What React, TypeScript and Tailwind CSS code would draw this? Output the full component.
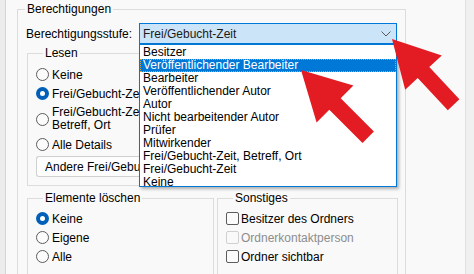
import React from "react";

const GroupBox = ({ title, className, children }: { title: string; className?: string; children?: React.ReactNode }) => (
  <fieldset className={`border border-[#dcdcdc] ${className ?? ""}`}>
    <legend className="ml-[7px] px-[2px] leading-[14px]">{title}</legend>
    {children}
  </fieldset>
);

const Radio = ({ checked }: { checked?: boolean }) =>
  checked ? (
    <span className="w-[13px] h-[13px] rounded-full bg-[#005fb8] flex items-center justify-center shrink-0">
      <span className="w-[5px] h-[5px] rounded-full bg-white" />
    </span>
  ) : (
    <span className="w-[13px] h-[13px] rounded-full border border-[#5c5c5c] bg-[#fbfbfb] shrink-0" />
  );

const Check = ({ disabled }: { disabled?: boolean }) => (
  <span
    className={`w-[13px] h-[13px] rounded-[2px] border shrink-0 ${
      disabled ? "border-[#d0d0d0] bg-[#f9f9f9]" : "border-[#5c5c5c] bg-[#fbfbfb]"
    }`}
  />
);

const options = [
  "Besitzer",
  "Veröffentlichender Bearbeiter",
  "Bearbeiter",
  "Veröffentlichender Autor",
  "Autor",
  "Nicht bearbeitender Autor",
  "Prüfer",
  "Mitwirkender",
  "Frei/Gebucht-Zeit, Betreff, Ort",
  "Frei/Gebucht-Zeit",
  "Keine",
];

export default function App() {
  return (
    <div
      className="relative w-[474px] h-[274px] flex overflow-hidden bg-[#f0f0f0] text-[12px] text-black"
      style={{ fontFamily: '"Liberation Sans", Arial, sans-serif' }}
    >
      <div className="w-[6px] bg-[#ececec] border-r border-[#d6d6d6] shrink-0" />
      <div className="w-[460px] bg-[#f9f9f9] border-r border-[#e0e0e0] shrink-0 pl-[11px] pt-[2px]">
        <GroupBox title="Berechtigungen" className="w-[389px] pb-[30px]">
          <div className="flex items-center mt-[7px] pl-[8px]">
            <span className="w-[113px]">Berechtigungsstufe:</span>
            <div className="w-[258px] h-[21px] bg-[#cce4f7] border border-[#0078d7] flex items-center justify-between pl-[3px] pr-[5px] text-[#1a1a1a]">
              <span>Frei/Gebucht-Zeit</span>
              <svg width="10" height="6" viewBox="0 0 10 6">
                <polyline points="0.5,0.5 5,5 9.5,0.5" fill="none" stroke="#5a5a5a" strokeWidth="1" />
              </svg>
            </div>
          </div>

          <GroupBox title="Lesen" className="ml-[9px] mt-[2px] w-[187px] pl-[8px] pt-[5px] pb-[8px]">
            <div className="flex items-center gap-[3px] h-[19px]">
              <Radio />
              <span>Keine</span>
            </div>
            <div className="flex items-center gap-[3px] h-[19px]">
              <Radio checked />
              <span className="whitespace-nowrap">Frei/Gebucht-Zeit</span>
            </div>
            <div className="flex items-center gap-[3px] h-[32px]">
              <Radio />
              <span className="leading-[13px]">
                Frei/Gebucht-Zeit,
                <br />
                Betreff, Ort
              </span>
            </div>
            <div className="flex items-center gap-[3px] h-[19px]">
              <Radio />
              <span>Alle Details</span>
            </div>
            <button className="mt-[2px] w-[104px] h-[21px] rounded-l-[3px] border border-r-0 border-[#d0d0d0] bg-[#fdfdfd] text-left pl-[8px] whitespace-nowrap overflow-hidden">
              Andere Frei/Gebucht-Zeit...
            </button>
          </GroupBox>

          <div className="flex gap-[3px] ml-[9px] mt-[5px]">
            <GroupBox title="Elemente löschen" className="w-[187px] pl-[8px] pt-[4px] pb-[9px]">
              <div className="flex items-center gap-[3px] h-[19px]">
                <Radio checked />
                <span>Keine</span>
              </div>
              <div className="flex items-center gap-[3px] h-[19px]">
                <Radio />
                <span>Eigene</span>
              </div>
              <div className="flex items-center gap-[3px] h-[19px]">
                <Radio />
                <span>Alle</span>
              </div>
            </GroupBox>
            <GroupBox title="Sonstiges" className="w-[181px] pl-[8px] pt-[4px] pb-[9px]">
              <div className="flex items-center gap-[2px] h-[19px]">
                <Check />
                <span>Besitzer des Ordners</span>
              </div>
              <div className="flex items-center gap-[2px] h-[19px]">
                <Check disabled />
                <span className="text-[#8d8d8d]">Ordnerkontaktperson</span>
              </div>
              <div className="flex items-center gap-[2px] h-[19px]">
                <Check />
                <span>Ordner sichtbar</span>
              </div>
            </GroupBox>
          </div>
        </GroupBox>
      </div>

      {/* open dropdown list */}
      <ul className="absolute left-[139px] top-[44px] w-[258px] h-[143px] bg-white border border-[#0078d7] shadow-[2px_2px_3px_rgba(0,0,0,0.3)] pt-px">
        {options.map((o, i) => (
          <li
            key={o}
            className={`h-[13px] leading-[13px] pl-[3px] whitespace-nowrap ${
              i === 1 ? "bg-[#0078d7] text-white outline outline-1 outline-dotted outline-[#d9a441] -outline-offset-1" : ""
            }`}
          >
            {o}
          </li>
        ))}
      </ul>

      {/* red annotation arrows */}
      <svg className="absolute left-0 top-0 pointer-events-none" width="474" height="274">
        <polygon
          points="392,39 441.8,55.5 429.3,67.1 459.4,99.2 447.8,110.2 417.7,78.1 405.2,89.7"
          fill="#e31b23"
        />
        <polygon
          points="301,70 353.4,85.6 340.7,98.3 373.9,131.5 362.5,142.9 329.3,109.7 316.6,122.4"
          fill="#e31b23"
        />
      </svg>
    </div>
  );
}
